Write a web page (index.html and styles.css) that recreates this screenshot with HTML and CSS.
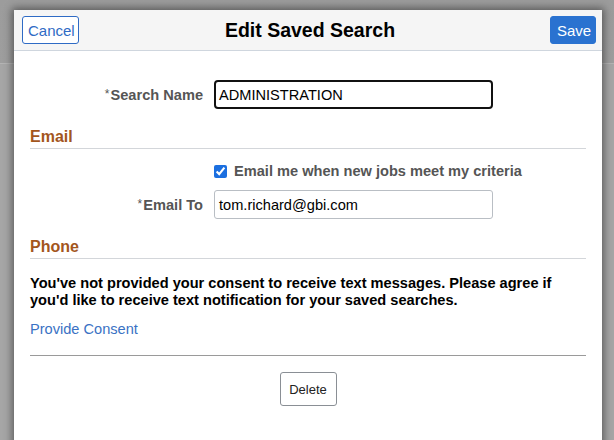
FILE: index.html
```html
<!DOCTYPE html>
<html lang="en">
<head>
<meta charset="utf-8">
<title>Edit Saved Search</title>
<link rel="stylesheet" href="styles.css">
</head>
<body>
<div class="modal">
  <div class="modal-header">
    <div class="hdr-left"><button class="btn btn-cancel">Cancel</button></div>
    <h1 class="modal-title">Edit Saved Search</h1>
    <div class="hdr-right"><button class="btn btn-save">Save</button></div>
  </div>
  <div class="modal-body">
    <div class="form-row row-name">
      <label class="field-label"><span class="req">*</span>Search Name</label>
      <div class="input input-focus">ADMINISTRATION</div>
    </div>

    <h2 class="section-title">Email</h2>
    <div class="form-row row-check">
      <span></span>
      <label class="check-label"><input type="checkbox" class="check" checked>Email me when new jobs meet my criteria</label>
    </div>
    <div class="form-row row-email">
      <label class="field-label"><span class="req">*</span>Email To</label>
      <div class="input">tom.richard@gbi.com</div>
    </div>

    <h2 class="section-title section-phone">Phone</h2>
    <p class="consent-text">You've not provided your consent to receive text messages. Please agree if you'd like to receive text notification for your saved searches.</p>
    <a class="consent-link" href="#">Provide Consent</a>
    <hr class="divider">
    <div class="actions">
      <button class="btn btn-delete">Delete</button>
    </div>
  </div>
</div>
</body>
</html>
```

FILE: styles.css
```css
html, body {
  margin: 0;
  padding: 0;
  height: 100%;
  overflow: hidden;
}
body {
  font-family: "Liberation Sans", Arial, sans-serif;
  background: linear-gradient(to bottom, #9c9c9c 0, #9e9e9e 63px, #b4b4b4 63px, #b4b4b4 64px, #a6a6a6 64px, #a6a6a6 100%);
  padding-top: 10px;
  box-sizing: border-box;
}
.modal {
  margin-left: 14px;
  width: 588px;
  height: 440px;
  background: #ffffff;
  box-shadow: 0 0 8px 2px rgba(0, 0, 0, 0.45);
}
.modal-header {
  height: 40px;
  background: #f5f5f5;
  border-bottom: 1px solid #cfd6de;
  display: grid;
  grid-template-columns: 1fr auto 1fr;
  align-items: center;
  padding: 0 6px 0 8px;
}
.hdr-left { justify-self: start; }
.hdr-right { justify-self: end; }
.modal-title {
  margin: 0;
  font-size: 19.5px;
  font-weight: bold;
  color: #000;
  position: relative;
  left: 1px;
}
.btn {
  font-family: "Liberation Sans", Arial, sans-serif;
  height: 28px;
  border-radius: 3px;
  cursor: pointer;
  box-sizing: border-box;
}
.btn-cancel {
  font-size: 15px;
  color: #2f6bc5;
  background: #ffffff;
  border: 1px solid #2f6bc5;
  padding: 0 5px;
  width: 57px;
}
.btn-save {
  font-size: 15px;
  color: #ffffff;
  background: #2a72d0;
  border: 1px solid #2a72d0;
  padding: 0 6px;
  width: 46px;
}
.modal-body {
  padding: 29px 16px 0 16px;
}
.form-row {
  display: grid;
  grid-template-columns: 173px 279px;
  column-gap: 11px;
  align-items: center;
}
.field-label {
  text-align: right;
  font-size: 14.6px;
  font-weight: bold;
  color: #555555;
}
.req {
  font-weight: normal;
  font-size: 12px;
  vertical-align: 2px;
  margin-right: 1px;
}
.input {
  box-sizing: border-box;
  height: 29px;
  border: 1px solid #b9bec4;
  border-radius: 3px;
  font-size: 14.6px;
  color: #000;
  padding: 0 4px;
  display: flex;
  align-items: center;
}
.input-focus {
  border: 2px solid #111111;
  border-radius: 4px;
  padding: 0 3px;
}
.section-title {
  margin: 19px 0 0 0;
  font-size: 16px;
  line-height: 18px;
  font-weight: bold;
  color: #a3561d;
  padding-bottom: 2px;
  border-bottom: 1px solid #d3d6da;
}
.section-phone {
  margin-top: 19px;
}
.row-check {
  margin-top: 13px;
  height: 18px;
}
.check-label {
  display: flex;
  align-items: center;
  font-size: 14.6px;
  font-weight: bold;
  color: #555555;
  white-space: nowrap;
}
.check {
  margin: 0 7px 0 0;
  width: 13px;
  height: 13px;
  accent-color: #1b6fe0;
}
.row-email {
  margin-top: 10px;
}
.consent-text {
  margin: 16px 0 0 0;
  font-size: 14.6px;
  line-height: 16.5px;
  font-weight: bold;
  color: #000;
}
.consent-link {
  display: block;
  margin-top: 13px;
  font-size: 14.6px;
  line-height: 17px;
  color: #3a72c4;
  text-decoration: none;
}
.divider {
  margin: 17px 0 0 0;
  border: 0;
  border-top: 1px solid #9a9a9a;
  height: 0;
}
.actions {
  display: flex;
  justify-content: center;
  padding-top: 16px;
}
.btn-delete {
  height: 34px;
  width: 57px;
  font-size: 13px;
  color: #222;
  background: #ffffff;
  border: 1px solid #8a8f95;
  padding: 0;
}
```
